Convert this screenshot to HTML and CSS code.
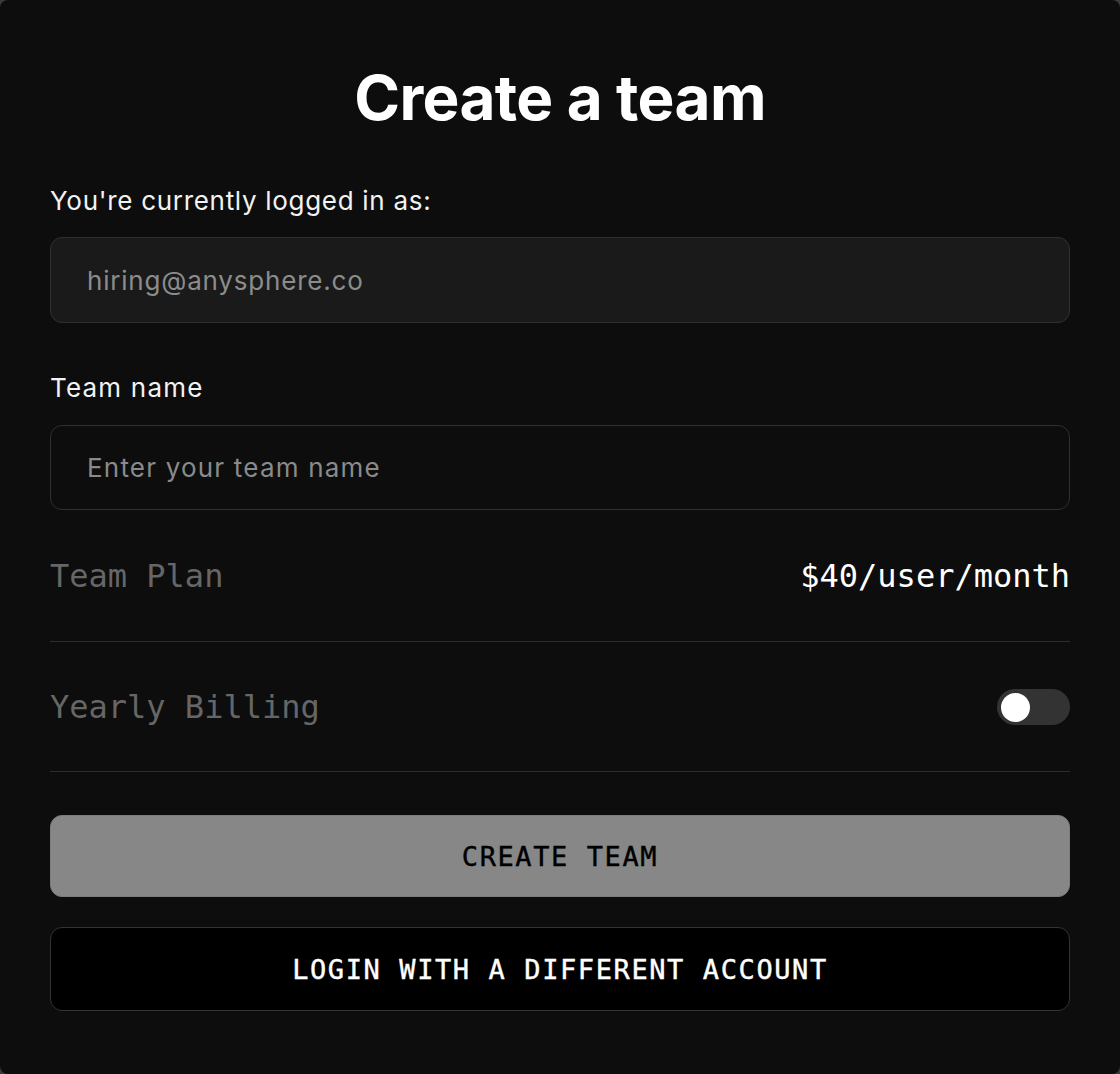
FILE: index.html
```html
<!DOCTYPE html>
<html lang="en">
<head>
<meta charset="utf-8">
<title>Create a team</title>
<link rel="stylesheet" href="styles.css">
</head>
<body>
<main class="card">
  <h1 class="title">Create a team</h1>
  <form class="form">
    <label class="field-label" for="email">You're currently logged in as:</label>
    <input class="input input-disabled" id="email" type="email" value="hiring@anysphere.co" disabled>

    <label class="field-label field-label-spaced" for="team">Team name</label>
    <input class="input" id="team" type="text" placeholder="Enter your team name">

    <div class="rows">
      <div class="row">
        <span class="row-key">Team Plan</span>
        <span class="row-value">$40/user/month</span>
      </div>
      <div class="row">
        <span class="row-key">Yearly Billing</span>
        <span class="toggle"><span class="knob"></span></span>
      </div>
    </div>

    <button class="btn btn-primary" type="button">CREATE TEAM</button>
    <button class="btn btn-secondary" type="button">LOGIN WITH A DIFFERENT ACCOUNT</button>
  </form>
</main>
</body>
</html>
```
FILE: styles.css
```css
html {
  background: #3a3a3a;
}
body {
  margin: 0;
  font-family: Inter, "Noto Sans", sans-serif;
  color: #ffffff;
}
.card {
  box-sizing: border-box;
  height: 1074px;
  background: #0d0d0d;
  border-radius: 8px;
  padding: 62px 50px 0;
  overflow: hidden;
}
.title {
  margin: 0 0 48px;
  font-size: 62px;
  line-height: 72px;
  font-weight: 700;
  letter-spacing: -0.01em;
  text-align: center;
}
.form {
  display: flex;
  flex-direction: column;
}
.field-label {
  font-size: 26px;
  line-height: 38px;
  letter-spacing: 0.7px;
  color: #f2f2f2;
  margin-bottom: 17px;
}
.field-label-spaced {
  margin-top: 46px;
  margin-bottom: 18px;
  letter-spacing: 1.2px;
}
.input {
  box-sizing: border-box;
  height: 86px;
  width: 100%;
  padding: 0 36px;
  border-radius: 12px;
  border: 1px solid #303030;
  background: #0d0d0d;
  color: #e0e0e0;
  font-family: Inter, "Noto Sans", sans-serif;
  font-size: 26px;
  letter-spacing: 0.8px;
  outline: none;
}
.input::placeholder {
  color: #8a8a8a;
  letter-spacing: 1.2px;
}
.input-disabled {
  background: #1a1a1a;
  color: #8c8c8c;
  -webkit-text-fill-color: #8c8c8c;
}
#team {
  height: 85px;
}
.rows {
  margin-top: 1px;
}
.row {
  display: flex;
  align-items: center;
  justify-content: space-between;
  padding: 45px 0;
  border-bottom: 1px solid #2e2e2e;
  line-height: 40px;
  font-family: "DejaVu Sans Mono", "Liberation Mono", monospace;
  font-size: 32px;
}
.row:last-child {
  padding-bottom: 44px;
}
.row-key {
  color: #666666;
}
.row-value {
  color: #ffffff;
}
.toggle {
  position: relative;
  width: 73px;
  height: 36px;
  border-radius: 18px;
  background: #333333;
}
.knob {
  position: absolute;
  left: 4px;
  top: 3.5px;
  width: 29px;
  height: 29px;
  border-radius: 50%;
  background: #ffffff;
}
.btn {
  box-sizing: border-box;
  width: 100%;
  border-radius: 12px;
  font-family: "DejaVu Sans Mono", "Liberation Mono", monospace;
  font-size: 27px;
  letter-spacing: 1.6px;
  cursor: pointer;
  -webkit-text-stroke: 0.4px currentColor;
}
.btn-primary {
  margin-top: 43px;
  height: 82px;
  background: #878787;
  border: 1px solid #7c7c7c;
  color: #000000;
}
.btn-secondary {
  margin-top: 30px;
  height: 84px;
  background: #000000;
  border: 1px solid #333333;
  color: #ffffff;
}
```
